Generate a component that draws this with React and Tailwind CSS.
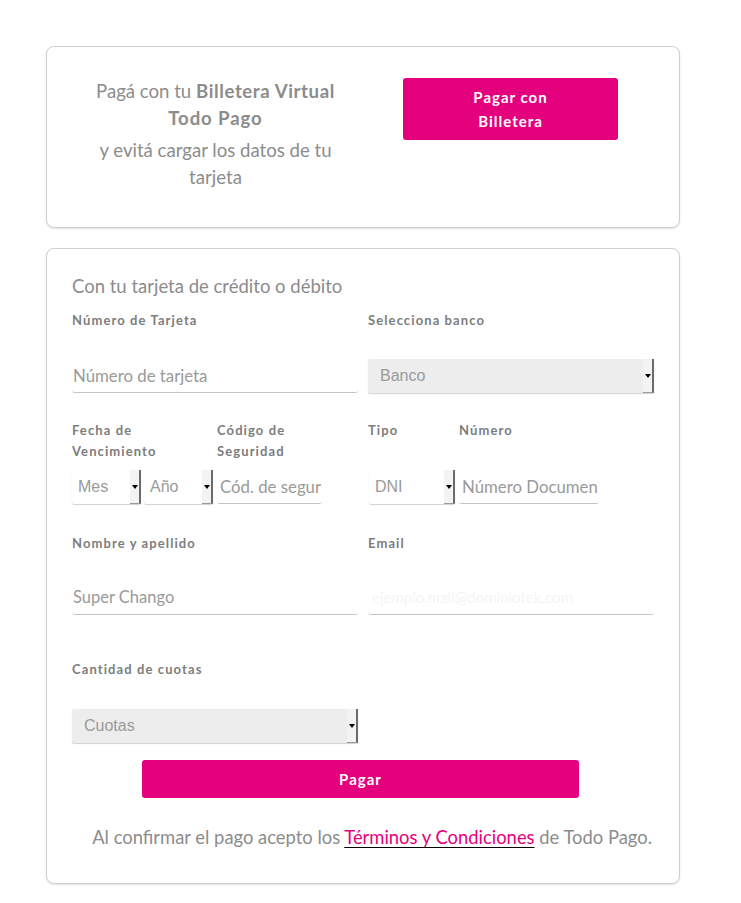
import React from "react";

const lato = { fontFamily: "Lato, 'Noto Sans', sans-serif" };

function Arrow() {
  return (
    <div className="flex h-full w-[11px] shrink-0 items-center justify-center bg-[#f3f3f3] border-r-2 border-b border-r-[#6b6b6b] border-b-[#9a9a9a]">
      <div className="h-0 w-0 border-l-[3px] border-r-[3px] border-t-[4px] border-l-transparent border-r-transparent border-t-black" />
    </div>
  );
}

function Select({ label, gray, className = "", pad = "pl-[6px]" }) {
  return (
    <div
      className={`flex h-[34px] items-stretch rounded-[2px] ${gray ? "bg-[#ededed]" : "bg-white"} shadow-[0_1px_1px_rgba(0,0,0,0.18)] ${className}`}
    >
      <div className={`flex flex-1 items-center overflow-hidden ${pad} text-[16px] text-[#9a9a9a] whitespace-nowrap`} style={{ fontFamily: "'Liberation Sans', Arial, sans-serif" }}>
        {label}
      </div>
      <Arrow />
    </div>
  );
}

function Input({ text, className = "", color = "text-[#9a9a9a]", size = "text-[16.8px]" }) {
  return (
    <div className={`flex h-[34px] items-center overflow-hidden whitespace-nowrap border-b border-[#c4c4c4] rounded-b-[3px] pl-[1px] ${size} ${color} ${className}`} style={lato}>
      {text}
    </div>
  );
}

function Label({ children, className = "" }) {
  return (
    <div className={`text-[13px] font-bold leading-[21px] tracking-[1.1px] text-[#7d7d7d] ${className}`} style={lato}>
      {children}
    </div>
  );
}

export default function App() {
  return (
    <div className="min-h-[903px] bg-white pt-[46px] pl-[46px]" style={lato}>
      {/* Wallet card */}
      <div className="w-[634px] rounded-[8px] border border-[#cfcfcf] shadow-[0_1px_2px_rgba(0,0,0,0.12)] bg-white px-[26px] pt-[31px] pb-[36px]">
        <div className="grid grid-cols-2 gap-[10px]">
          <div className="text-center text-[18.6px] leading-[27px] text-[#8c8c8c]">
            <div>
              Pagá con tu <span className="font-bold tracking-[0.6px]">Billetera Virtual</span>
            </div>
            <div className="font-bold tracking-[0.9px]">Todo Pago</div>
            <div className="mt-[5px]">y evitá cargar los datos de tu</div>
            <div>tarjeta</div>
          </div>
          <div className="flex justify-center">
            <div className="flex h-[62px] w-[215px] flex-col items-center justify-center rounded-[3px] bg-[#e5007d] text-[15px] font-bold leading-[24px] tracking-[1px] text-white">
              <span>Pagar con</span>
              <span>Billetera</span>
            </div>
          </div>
        </div>
      </div>

      {/* Card form */}
      <div className="mt-[20px] w-[634px] rounded-[8px] border border-[#cfcfcf] shadow-[0_1px_2px_rgba(0,0,0,0.12)] bg-white px-[25px] pt-[24px] pb-[33px]">
        <div className="text-[18.5px] leading-[26px] text-[#8c8c8c]">Con tu tarjeta de crédito o débito</div>

        <div className="mt-[11px] grid grid-cols-2 gap-x-[10px]">
          <div>
            <Label>Número de Tarjeta</Label>
            <Input text="Número de tarjeta" className="mt-[28px]" />
          </div>
          <div>
            <Label>Selecciona banco</Label>
            <Select label="Banco" gray pad="pl-[12px]" className="mt-[28px]" />
          </div>
        </div>

        <div className="mt-[27px] grid grid-cols-2 gap-x-[10px]">
          <div className="flex">
            <div className="w-[145px]">
              <Label className="h-[42px]">
                Fecha de
                <br />
                Vencimiento
              </Label>
              <div className="mt-[8px] flex gap-[3px]">
                <Select label="Mes" className="w-[69px]" />
                <Select label="Año" className="w-[69px]" />
              </div>
            </div>
            <div className="w-[106px]">
              <Label className="h-[42px]">
                Código de
                <br />
                Seguridad
              </Label>
              <Input text="Cód. de segur" className="mt-[8px] w-[105px] pl-[3px]" />
            </div>
          </div>
          <div className="flex">
            <div className="w-[91px]">
              <Label className="h-[42px]">Tipo</Label>
              <Select label="DNI" className="mt-[8px] w-[86px] ml-[1px]" />
            </div>
            <div>
              <Label className="h-[42px]">Número</Label>
              <Input text="Número Documen" className="mt-[8px] w-[140px] pl-[3px]" />
            </div>
          </div>
        </div>

        <div className="mt-[29px] grid grid-cols-2 gap-x-[10px]">
          <div>
            <Label>Nombre y apellido</Label>
            <Input text="Super Chango" size="text-[16.5px]" className="mt-[27px]" />
          </div>
          <div>
            <Label>Email</Label>
            <Input text="ejemplo.mail@dominiotek.com" color="text-[#f5f5f5]" size="text-[15px]" className="mt-[27px] pl-[4px]" />
          </div>
        </div>

        <div className="mt-[44px]">
          <Label>Cantidad de cuotas</Label>
          <Select label="Cuotas" pad="pl-[12px]" gray className="mt-[29px] w-[286px]" />
        </div>

        <div className="mt-[17px] ml-[70px] flex h-[38px] w-[437px] items-center justify-center rounded-[3px] bg-[#e5007d] text-[15px] font-bold tracking-[1px] text-white">
          Pagar
        </div>

        <div className="mt-[26px] mr-[2px] text-right text-[18.4px] leading-[26px] text-[#8c8c8c]">
          Al confirmar el pago acepto los{" "}
          <span className="text-[#e5007d] underline decoration-black underline-offset-[3px]">Términos y Condiciones</span> de Todo Pago.
        </div>
      </div>
    </div>
  );
}
